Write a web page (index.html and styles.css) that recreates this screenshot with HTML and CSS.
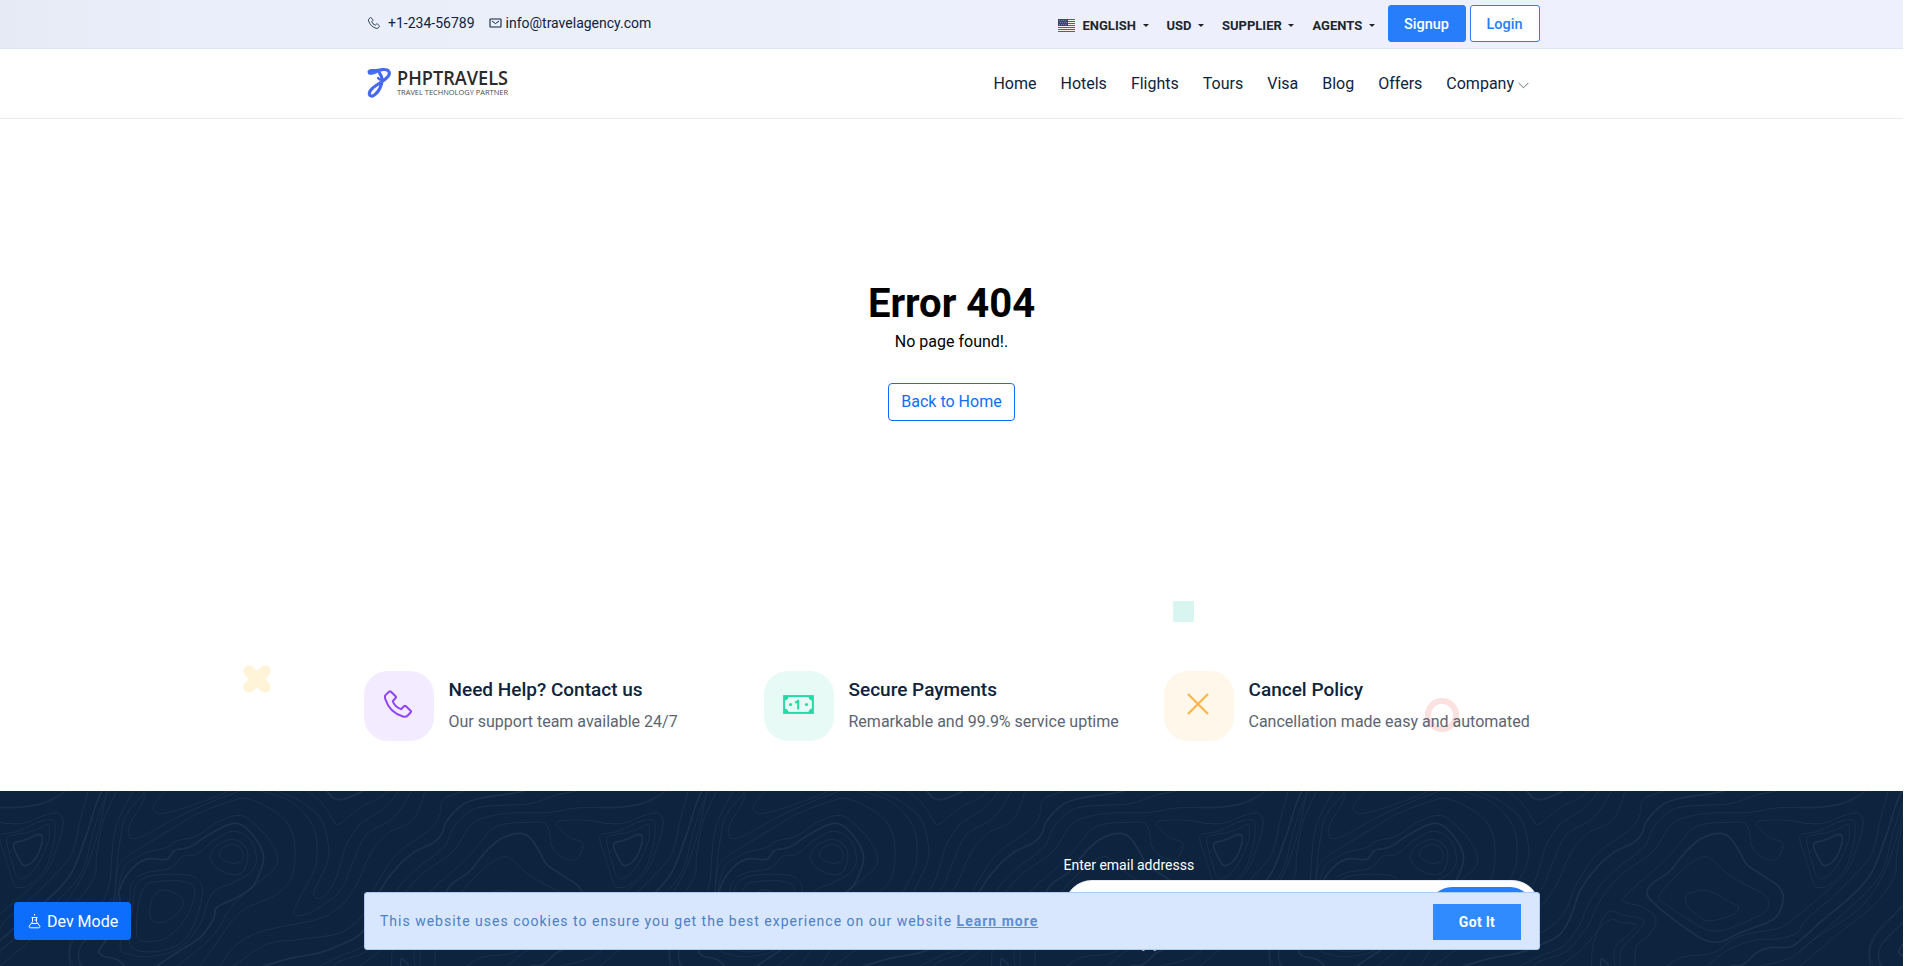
FILE: index.html
```html
<!DOCTYPE html>
<html lang="en">
<head>
<meta charset="utf-8">
<title>Error 404 - PHPTRAVELS</title>
<link rel="stylesheet" href="styles.css">
</head>
<body>
<svg class="defs" width="0" height="0">
  <symbol id="phone" viewBox="0 0 28 28"><path d="M5 1.700Q6 .9 7 1.700L11.600 6.200Q12.400 7.100 11.600 8L8.800 11.200Q10.500 16.500 17 19.200L20 16.300Q21 15.500 22 16.300L26.600 20.700Q27.400 21.600 26.600 22.500L23.500 25.800Q22 27.300 19 26.500C10.500 24 4 17.500 1.300 9Q.4 6.200 1.700 4.900Z" fill="none" stroke="currentColor" stroke-width="2" stroke-linejoin="round"/></symbol>
</svg>
<div class="page">
  <header>
    <div class="topbar"><div class="container topbar-row">
      <div class="contact">
        <svg class="ic-phone" width="12" height="12"><use href="#phone"/></svg><span class="tel">+1-234-56789</span>
        <svg class="ic-mail" width="13" height="10" viewBox="0 0 13 10" fill="none" stroke="currentColor"><rect x="1" y="1" width="11" height="8" rx=".5" stroke-width="1.100"/><path d="M3 3l3.500 2.600L10 3" stroke-width="1"/></svg><span>info@travelagency.com</span>
      </div>
      <div class="tools">
        <svg class="flag" width="17" height="13" viewBox="0 0 17 13"><path fill="#f3eff3" d="M0 0h17v13H0z"/><path stroke="#b9383f" d="M0 .5h17M0 2.5h17M0 4.5h17M0 6.5h17M0 8.5h17M0 10.5h17M0 12.5h17"/><path fill="#3c4672" d="M0 0h10v7H0z"/><path stroke="#777e9f" stroke-dasharray="1 1" d="M1 1.5h8M2 3.5h7M1 5.5h8"/></svg>
        <span class="drop english">ENGLISH</span><span class="drop usd">USD</span><span class="drop supplier">SUPPLIER</span><span class="drop agents">AGENTS</span>
        <a class="btn-top signup">Signup</a><a class="btn-top login">Login</a>
      </div>
    </div></div>
    <div class="navbar"><div class="container nav-row">
      <svg class="logo" width="144" height="34" viewBox="0 0 144 34">
        <g fill="none" stroke="#4569f5" stroke-linecap="round" stroke-linejoin="round"><path stroke-width="3.100" d="M7 5.800C4 5.500 4.500 3.500 8 3.600C12 3.700 14 3.200 18 2.600C25 2 27 5.500 24 9.500C21 13 17 15.500 12 18.500C6.500 22 4 26 6 28.500C8.500 31 14 25.500 16 21C18.500 16 19 10.500 15.500 6"/><path stroke-width="2.200" d="M5 6.500c4 .8 6-1.200 9.500-2.200M14 11c1.500 2 3 2 4 .5"/></g>
        <text x="33" y="18" class="logo-name" textLength="111" lengthAdjust="spacingAndGlyphs">PHPTRAVELS</text>
        <text x="33" y="28" class="logo-tag" textLength="111" lengthAdjust="spacingAndGlyphs">TRAVEL TECHNOLOGY PARTNER</text>
      </svg>
      <nav><a>Home</a><a>Hotels</a><a>Flights</a><a>Tours</a><a>Visa</a><a>Blog</a><a>Offers</a><a>Company<svg width="11" height="7" viewBox="0 0 11 7"><path d="M.7 1L5.500 5.800 10.300 1" fill="none" stroke="#5f6c7c"/></svg></a></nav>
    </div></div>
  </header>
  <main>
    <h1>Error 404</h1>
    <p>No page found!.</p>
    <a class="back">Back to Home</a>
  </main>
  <section class="features">
    <svg class="shape cross" width="28" height="28" viewBox="0 0 28 28"><path d="M6 6l16 16M22 6L6 22" stroke="#fff4d8" stroke-width="11.500" stroke-linecap="round"/></svg>
    <i class="shape square"></i><i class="shape ring"></i>
    <div class="container feature-row">
      <div class="feature"><div class="tile violet"><svg width="28" height="28"><use href="#phone"/></svg></div><div><h3>Need Help? Contact us</h3><p>Our support team available 24/7</p></div></div>
      <div class="feature"><div class="tile mint"><svg width="31" height="19" viewBox="0 0 31 19"><rect x="1.100" y="1.100" width="28.800" height="16.800" fill="none" stroke="currentColor" stroke-width="2"/><path fill="currentColor" d="M2 2h3.500Q5 5 2 5.500zM29 2h-3.500Q26 5 29 5.500zM2 17h3.500Q5 14 2 13.500zM29 17h-3.500Q26 14 29 13.500z"/><path d="M12 7.600q2.800-.3 3.200-2.600v9.500" fill="none" stroke="currentColor" stroke-width="2"/><circle cx="7.500" cy="9.500" r="1.600" fill="currentColor"/><circle cx="23.500" cy="9.500" r="1.600" fill="currentColor"/></svg></div><div><h3>Secure Payments</h3><p>Remarkable and 99.9% service uptime</p></div></div>
      <div class="feature"><div class="tile amber"><svg width="22" height="22" viewBox="0 0 22 22"><path d="M1 1l20 20M21 1L1 21" stroke="currentColor" stroke-width="2.300"/></svg></div><div><h3>Cancel Policy</h3><p>Cancellation made easy and automated</p></div></div>
    </div>
  </section>
  <footer>
    <svg class="contours" width="1903" height="175" viewBox="0 0 1903 175"></svg>
    <div class="container">
      <div class="newsletter">
        <label>Enter email addresss</label>
        <div class="field"><span class="submit"></span></div>
        <span class="note">y y</span>
      </div>
    </div>
  </footer>
</div>
<div class="cookie"><p>This website uses cookies to ensure you get the best experience on our website <a>Learn more</a></p><span class="got">Got It</span></div>
<a class="dev"><svg width="13" height="15" viewBox="0 0 13 15" fill="none" stroke="#fff"><path d="M3.500 3.500h6M4.500 3.500v4.300L1.300 12c-.6 1 0 1.800 1 1.800h8.400c1 0 1.600-.8 1-1.800L8.500 7.800V3.500M3.500 9.500h6"/><path d="M6.500 0v1.500M8 6H6.500"/></svg>Dev Mode</a>
<script src="contours.js"></script>
</body>
</html>
```
FILE: styles.css
```css
* { box-sizing: border-box; }
body { margin: 0; height: 966px; overflow: hidden; background: #fff; font-family: Roboto, "Liberation Sans", sans-serif; color: #0e233c; font-size: 16px; line-height: 24px; }
h1, h3, p { margin: 0; }
.defs { position: absolute; }
.page { width: 1903px; }
.container { width: 1176px; margin: 0 auto; }
.topbar { height: 49px; border-bottom: 1px solid #dfe5f3; background: linear-gradient(90deg, #e6eaf5 0, #eaeefa 9%, #ebeffa 30%, #edf0fc 55%, #eef1fd 100%); }
.topbar-row, .contact, .tools, .nav-row, nav, nav a { display: flex; align-items: center; }
.topbar-row { justify-content: space-between; align-items: flex-start; height: 48px; }
.contact { padding: 11px 0 0 4.500px; font-size: 14px; height: 35px; }
.tel { margin: 0 14px 0 8px; }
.ic-mail { margin-right: 4px; }
.tools { padding-top: 5px; height: 42px; font-size: 13px; font-weight: 700; color: #212529; }
.flag { margin: 4px 7.500px 0 0; }
.drop { display: flex; align-items: center; justify-content: space-between; margin-top: 4px; white-space: nowrap; }
.drop::after { content: ""; border: 3px solid transparent; border-top-color: #212529; border-bottom: 0; }
.english { width: 66.500px; margin-right: 17.500px; }
.usd { width: 37px; margin-right: 18.500px; }
.supplier { width: 72px; margin-right: 18.500px; }
.agents { width: 62px; margin-right: 13px; }
.btn-top { height: 37px; border: 1px solid #287dfa; border-radius: 3px; font-size: 14.500px; font-weight: 500; display: flex; align-items: center; justify-content: center; padding-top: 2px; }
.signup { width: 78px; background: #287dfa; color: #fff; margin-right: 4px; }
.login { width: 70px; background: #fff; color: #287dfa; }
.navbar { height: 70px; border-bottom: 1px solid #ebebeb; }
.nav-row { justify-content: space-between; height: 69px; }
.logo { overflow: visible; margin-top: 1px; }
.logo-name { font: 600 19px "Open Sans", sans-serif; fill: #2b2b2b; }
.logo-tag { font: 400 8px "Open Sans", sans-serif; fill: #4a4a4a; }
nav { gap: 24px; padding-right: 10.500px; }
nav a svg { margin: 3px 0 0 4px; }
main { height: 482px; display: flex; flex-direction: column; align-items: center; padding-top: 161px; color: #000; }
h1 { font-size: 40px; line-height: 48px; font-weight: 700; }
main p { margin-top: 2px; }
.back { margin-top: 29px; width: 127px; height: 38px; border: 1px solid #0d6efd; border-radius: 4px; color: #0d6efd; display: flex; align-items: center; justify-content: center; }
.features { height: 190px; position: relative; padding-top: 70px; }
.feature-row { display: flex; position: relative; }
.feature { width: 400px; flex: none; display: flex; }
.tile { width: 70px; height: 70px; border-radius: 24px; margin-right: 15px; flex: none; display: flex; align-items: center; justify-content: center; padding: 0 1px 4px 0; }
.violet { background: #f3ebff; color: #8e44fa; }
.mint { background: #e7faf5; color: #28d9a8; }
.amber { background: #fff7ea; color: #fbb64d; }
h3 { font-size: 19px; line-height: 24px; font-weight: 500; margin-top: 7px; }
.feature p { margin-top: 8px; color: #5d646f; white-space: nowrap; }
.shape { position: absolute; }
.cross { left: 243px; top: 64px; }
.square { left: 1173px; top: 0; width: 21px; height: 21px; border-radius: 1px; background: #d8f5f0; }
.ring { left: 1425px; top: 97px; width: 34px; height: 34px; border: 6px solid #fbe1e0; border-radius: 50%; }
footer { height: 175px; background: #0d233e; position: relative; overflow: hidden; }
.contours { position: absolute; left: 0; top: 0; fill: none; stroke: #1d314b; }
.newsletter { width: 476px; margin-left: auto; position: relative; padding-top: 64px; display: flex; flex-direction: column; font-size: 14px; line-height: 20px; color: #fff; }
.field { height: 60px; margin-top: 5px; background: #fff; border: 1px solid #e4e9f2; border-radius: 28px; padding: 6px 6px 6px 0; display: flex; justify-content: flex-end; }
.submit { width: 104px; border-radius: 24px; background: #287dfa; }
.note { margin: -7px 0 0 78px; font-size: 16px; color: #aeb6c1; }
.cookie { position: fixed; left: 364px; top: 892px; width: 1176px; height: 58px; border: 1px solid #a9ccf9; border-radius: 3px; background: #d8e7fe; display: flex; align-items: center; justify-content: space-between; padding: 0 18px 0 15px; color: #4b80c6; font-size: 14px; letter-spacing: 1px; }
.cookie a { font-weight: 700; text-decoration: underline; color: #5c8fd0; }
.got { width: 88px; height: 36px; background: #2f8bff; color: #fff; font-weight: 700; letter-spacing: .3px; display: flex; align-items: center; justify-content: center; margin-top: 2px; }
.dev { position: fixed; left: 14px; top: 902px; width: 117px; height: 38px; border-radius: 4px; background: #0d6efd; color: #fff; display: flex; align-items: center; padding: 1px 0 0 14px; gap: 6px; }
```
FILE: contours.js
```js
// Footer contour lines: each string lists x,y points; units are thirds of a pixel.
const left = {
  thin: [
    "0,48 60,48 120,38 170,18 195,0",
    "325,0 300,60 275,140 255,220 220,280 150,350 70,420 0,480",
    "350,0 310,90 290,190 285,250 250,310 190,370 100,440 0,525",
    "400,0 350,100 335,200 330,270 300,350 230,430 207,490 212,525",
    "440,0 380,70 360,150 350,235 340,330 300,400 240,470 240,525",
    "500,0 470,30 460,55 480,68 540,55 640,20 685,0",
    "430,0 430,30 390,100 388,135 405,143 440,130 540,75 640,30 720,0",
    "345,335 350,250 370,205 440,160 520,110 600,65 700,28 750,25 830,65 875,120 885,200 870,270 820,315 720,365 640,470 600,525",
    "350,335 360,270 380,220 440,185 500,170 530,150 590,135 650,95 715,73 760,95 810,150 833,200 820,235 780,270 700,340 650,420 590,480 530,525",
    "388,330 395,275 440,245 510,232 550,195 590,190 640,150 697,121 745,140 768,190 760,235 710,270 650,295 625,330 600,400 540,470 450,497 390,490 360,465 388,330",
    "700,145 735,165 743,205 725,245 690,250 650,230 631,200 640,175 665,155 700,145",
    "700,160 725,175 728,205 710,217 680,212 658,192 672,168 700,160",
    "540,250 590,262 607,300 590,380 550,450 480,480 420,480 392,465 388,430 400,330 410,280 450,255 540,250",
    "540,270 580,285 580,330 545,400 490,445 430,450 410,430 415,340 435,285 470,272 540,270",
    "500,297 545,320 545,350 510,385 470,395 450,375 455,325 475,303 500,297",
    "785,0 870,30 930,90 950,150 945,230 900,320 882,360 890,375 940,360 1020,300 1060,210 1100,130 1180,80 1235,0",
    "830,0 900,30 960,80 985,160 980,220 945,295 945,318 970,318 1000,280 1020,225 1040,160 1080,100 1140,60 1200,0",
    "920,0 970,40 1000,90 1020,98 1080,50 1130,25 1170,0",
    "660,525 700,470 760,430 830,410 950,385 1020,347 1070,280 1110,190 1160,130 1240,85 1275,0",
    "700,525 800,460 900,445 1020,425 1090,370 1130,280 1190,190 1290,115 1320,70 1330,25 1395,0",
    "960,525 1020,495 1090,465 1140,400 1170,330 1230,250 1330,170 1360,110 1410,60 1470,45 1590,38 1660,15 1730,0",
    "1000,525 1020,510 1100,480 1160,410 1200,330 1260,255 1360,180 1420,95 1520,67 1640,65 1740,50 1850,50 1940,35 1995,0"
  ],
  thick: [
    "980,0 1000,20 1020,26 1050,18 1090,0",
    "375,525 350,505 310,495 297,480 320,445 350,400 360,335 358,300 375,260 410,220 450,203 500,205 525,178 570,168 620,135 680,103 720,100 765,140 790,190 785,230 755,290 700,325 650,350 640,385 600,440 530,485 470,525",
    "790,525 880,500 960,485 1020,462 1080,430 1115,370 1140,300 1190,230 1240,185 1300,155 1325,130 1340,90 1390,40 1450,20 1520,10 1575,0"
  ]
};
const right = {
  thin: [
    "820,275 835,290 870,280 915,235 940,160 945,100 930,86 890,95 830,122 785,130 780,150 800,210 820,275",
    "835,262 870,250 900,210 925,150 928,105 918,101 880,120 810,135 800,150 815,210 835,262",
    "380,525 430,498 520,485 600,435 720,410 770,375 850,310 920,240 950,170 968,110 965,75 940,66 900,78 850,97 800,97 745,88 670,88 648,98 660,115 690,140 720,150 729,165 715,200 695,207 660,195 635,165 628,120 610,95 560,94 490,100 450,120 400,180 350,230 255,315 258,335 300,345 340,370 347,400 325,435 290,465 285,525",
    "500,525 560,480 640,448 720,443 770,425 800,385 880,315 940,255 995,190 1020,90 1045,0",
    "155,525 160,460 190,380 215,360 250,372 300,382 310,400 260,455 243,480 240,525",
    "60,525 130,470 180,410 215,385 245,395 288,400 270,425 225,470 225,525",
    "490,197 520,210 580,260 670,310 686,340 665,370 560,415 510,418 460,395 370,335 357,318 380,285 440,225 490,197",
    "485,298 520,305 560,328 595,348 580,370 510,390 475,375 440,340 440,312 485,298",
    "1120,320 1030,400 990,460 990,500 1000,525",
    "1120,370 1040,440 1015,490 1025,525",
    "660,525 750,500 830,440 960,350 1030,250 1075,120 1100,0"
  ],
  thick: [
    "825,155 860,145 895,130 907,140 900,175 880,210 855,224 840,210 822,170 825,155",
    "1085,0 1065,50 1040,130 1000,235 960,290 900,345 850,385 790,440 750,468 690,470 650,485 610,520 570,525",
    "535,127 570,140 600,185 620,220 670,255 715,285 730,320 715,370 680,395 600,425 550,450 515,453 480,440 400,385 340,335 320,305 340,275 390,240 430,190 480,145 535,127",
    "182,525 185,503 208,525"
  ]
};
function curve(text, shift) {
  const p = text.split(" ").map(s => { const [x, y] = s.split(",").map(Number); return [(x + shift) / 3, y / 3]; });
  const n = p.length - 1;
  const closed = p[0][0] === p[n][0] && p[0][1] === p[n][1];
  let d = "M" + p[0];
  for (let i = 0; i < n; i++) {
    const a = i ? p[i - 1] : closed ? p[n - 1] : p[0];
    const b = p[i], c = p[i + 1];
    const e = i + 2 <= n ? p[i + 2] : closed ? p[1] : c;
    d += "C" + [b[0] + (c[0] - a[0]) / 6, b[1] + (c[1] - a[1]) / 6, c[0] - (e[0] - b[0]) / 6, c[1] - (e[1] - b[1]) / 6, c[0], c[1]];
  }
  return d;
}
let out = "";
for (const [set, origin] of [[left, 0], [right, 1020]]) {
  for (const [kind, width] of [["thin", 0.9], ["thick", 1.7]]) {
    for (let tile = -1; tile < 4; tile++) {
      const d = set[kind].map(t => curve(t, origin + tile * 1800)).join("");
      out += `<path stroke-width="${width}" d="${d}"/>`;
    }
  }
}
document.querySelector(".contours").innerHTML = out;
```
